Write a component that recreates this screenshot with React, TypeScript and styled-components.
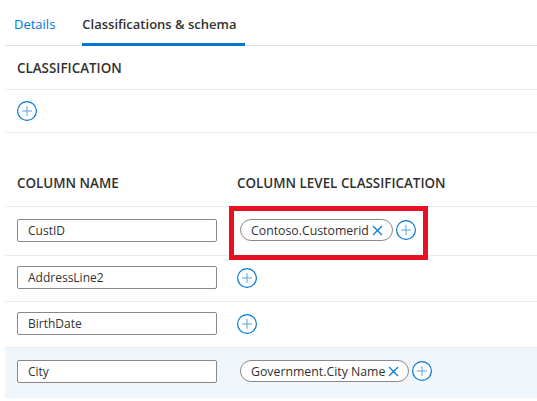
import React from "react";
import styled, { createGlobalStyle } from "styled-components";

const Global = createGlobalStyle`
  html, body { margin: 0; padding: 0; background: #ffffff; }
  body { font-family: "Open Sans", "Noto Sans", sans-serif; color: #323130; }
  * { box-sizing: border-box; }
`;

const Page = styled.div`
  margin-left: 5px;
  position: relative;
`;

const TabBar = styled.div`
  display: flex;
  align-items: stretch;
  height: 46px;
  border-bottom: 1px solid #e1dfdd;
  padding-left: 9px;
  gap: 27px;
`;

const Tab = styled.div<{ $active?: boolean }>`
  display: flex;
  align-items: center;
  padding-right: ${(p) => (p.$active ? "8px" : "0")};
  padding-top: 2px;
  font-size: 13px;
  font-weight: ${(p) => (p.$active ? 600 : 400)};
  color: ${(p) => (p.$active ? "#323130" : "#0078d4")};
  position: relative;
  &::after {
    content: "";
    display: ${(p) => (p.$active ? "block" : "none")};
    position: absolute;
    left: 0;
    right: 0;
    bottom: -1px;
    height: 3px;
    background: #0078d4;
  }
`;

const Section = styled.div<{ $h: number }>`
  height: ${(p) => p.$h}px;
  display: flex;
  align-items: center;
  padding-left: 12px;
  border-bottom: 1px solid #edebe9;
`;

const Heading = styled.div`
  font-size: 13.4px;
  font-weight: 600;
  color: #323130;
`;

const Grid = styled.div`
  display: grid;
  grid-template-columns: 220px 1fr;
  padding-left: 12px;
`;

const HeaderRow = styled(Grid)`
  height: 74px;
  align-items: end;
  padding-bottom: 14px;
  border-bottom: 1px solid #edebe9;
`;

const Row = styled(Grid)<{ $selected?: boolean; $last?: boolean }>`
  align-items: center;
  padding-top: 10px;
  padding-bottom: ${(p) => (p.$last ? "14px" : "12px")};
  background: ${(p) => (p.$selected ? "#eff6fc" : "transparent")};
  border-bottom: ${(p) => (p.$last ? "none" : "1px solid #edebe9")};
`;

const NameInput = styled.div`
  width: 200px;
  height: 23px;
  border: 1px solid #8a8886;
  border-radius: 2px;
  display: flex;
  align-items: center;
  padding-left: 10px;
  font-size: 12px;
  color: #323130;
  background: #ffffff;
`;

const Cell = styled.div<{ $tall?: boolean }>`
  display: flex;
  align-items: center;
  min-height: ${(p) => (p.$tall ? "26px" : "0")};
`;

const Chip = styled.div`
  height: 22px;
  display: flex;
  align-items: center;
  border: 1px solid #8a8886;
  border-radius: 11px;
  padding: 0 9px 0 10px;
  font-size: 12.3px;
  color: #323130;
  background: #ffffff;
  margin-left: 3px;
  gap: 3px;
`;

const IconButton = styled.span<{ $ml?: number }>`
  display: inline-flex;
  width: 20px;
  height: 20px;
  margin-left: ${(p) => p.$ml ?? 0}px;
`;

const Highlight = styled.div`
  position: absolute;
  left: 224px;
  top: 206px;
  width: 199px;
  height: 54px;
  border: 5px solid #e81123;
  pointer-events: none;
`;

const PlusIcon = ({ ml }: { ml?: number }) => (
  <IconButton $ml={ml}>
    <svg width="20" height="20" viewBox="0 0 20 20">
      <circle cx="10" cy="10" r="9.4" fill="#fff" stroke="#0078d4" strokeWidth="1.2" />
      <path d="M10 5v10M5 10h10" stroke="#5a9fe0" strokeWidth="1" />
    </svg>
  </IconButton>
);

const CloseIcon = () => (
  <svg width="11" height="11" viewBox="0 0 11 11">
    <path d="M1 1l9 9M10 1l-9 9" stroke="#0078d4" strokeWidth="1.2" />
  </svg>
);

type R = { name: string; chip?: string; selected?: boolean };
const rows: R[] = [
  { name: "CustID", chip: "Contoso.Customerid" },
  { name: "AddressLine2" },
  { name: "BirthDate" },
  { name: "City", chip: "Government.City Name", selected: true },
];

export default function App() {
  return (
    <Page>
      <Global />
      <TabBar>
        <Tab>Details</Tab>
        <Tab $active>Classifications &amp; schema</Tab>
      </TabBar>
      <Section $h={44}>
        <Heading>CLASSIFICATION</Heading>
      </Section>
      <Section $h={43}>
        <PlusIcon />
      </Section>
      <HeaderRow>
        <Heading>COLUMN NAME</Heading>
        <Heading>COLUMN LEVEL CLASSIFICATION</Heading>
      </HeaderRow>
      {rows.map((r, i) => (
        <Row key={r.name} $selected={r.selected} $last={i === rows.length - 1}>
          <NameInput>{r.name}</NameInput>
          <Cell $tall={!!r.chip}>
            {r.chip ? (
              <>
                <Chip>
                  {r.chip}
                  <CloseIcon />
                </Chip>
                <PlusIcon ml={3} />
              </>
            ) : (
              <PlusIcon />
            )}
          </Cell>
        </Row>
      ))}
      <Highlight />
    </Page>
  );
}
